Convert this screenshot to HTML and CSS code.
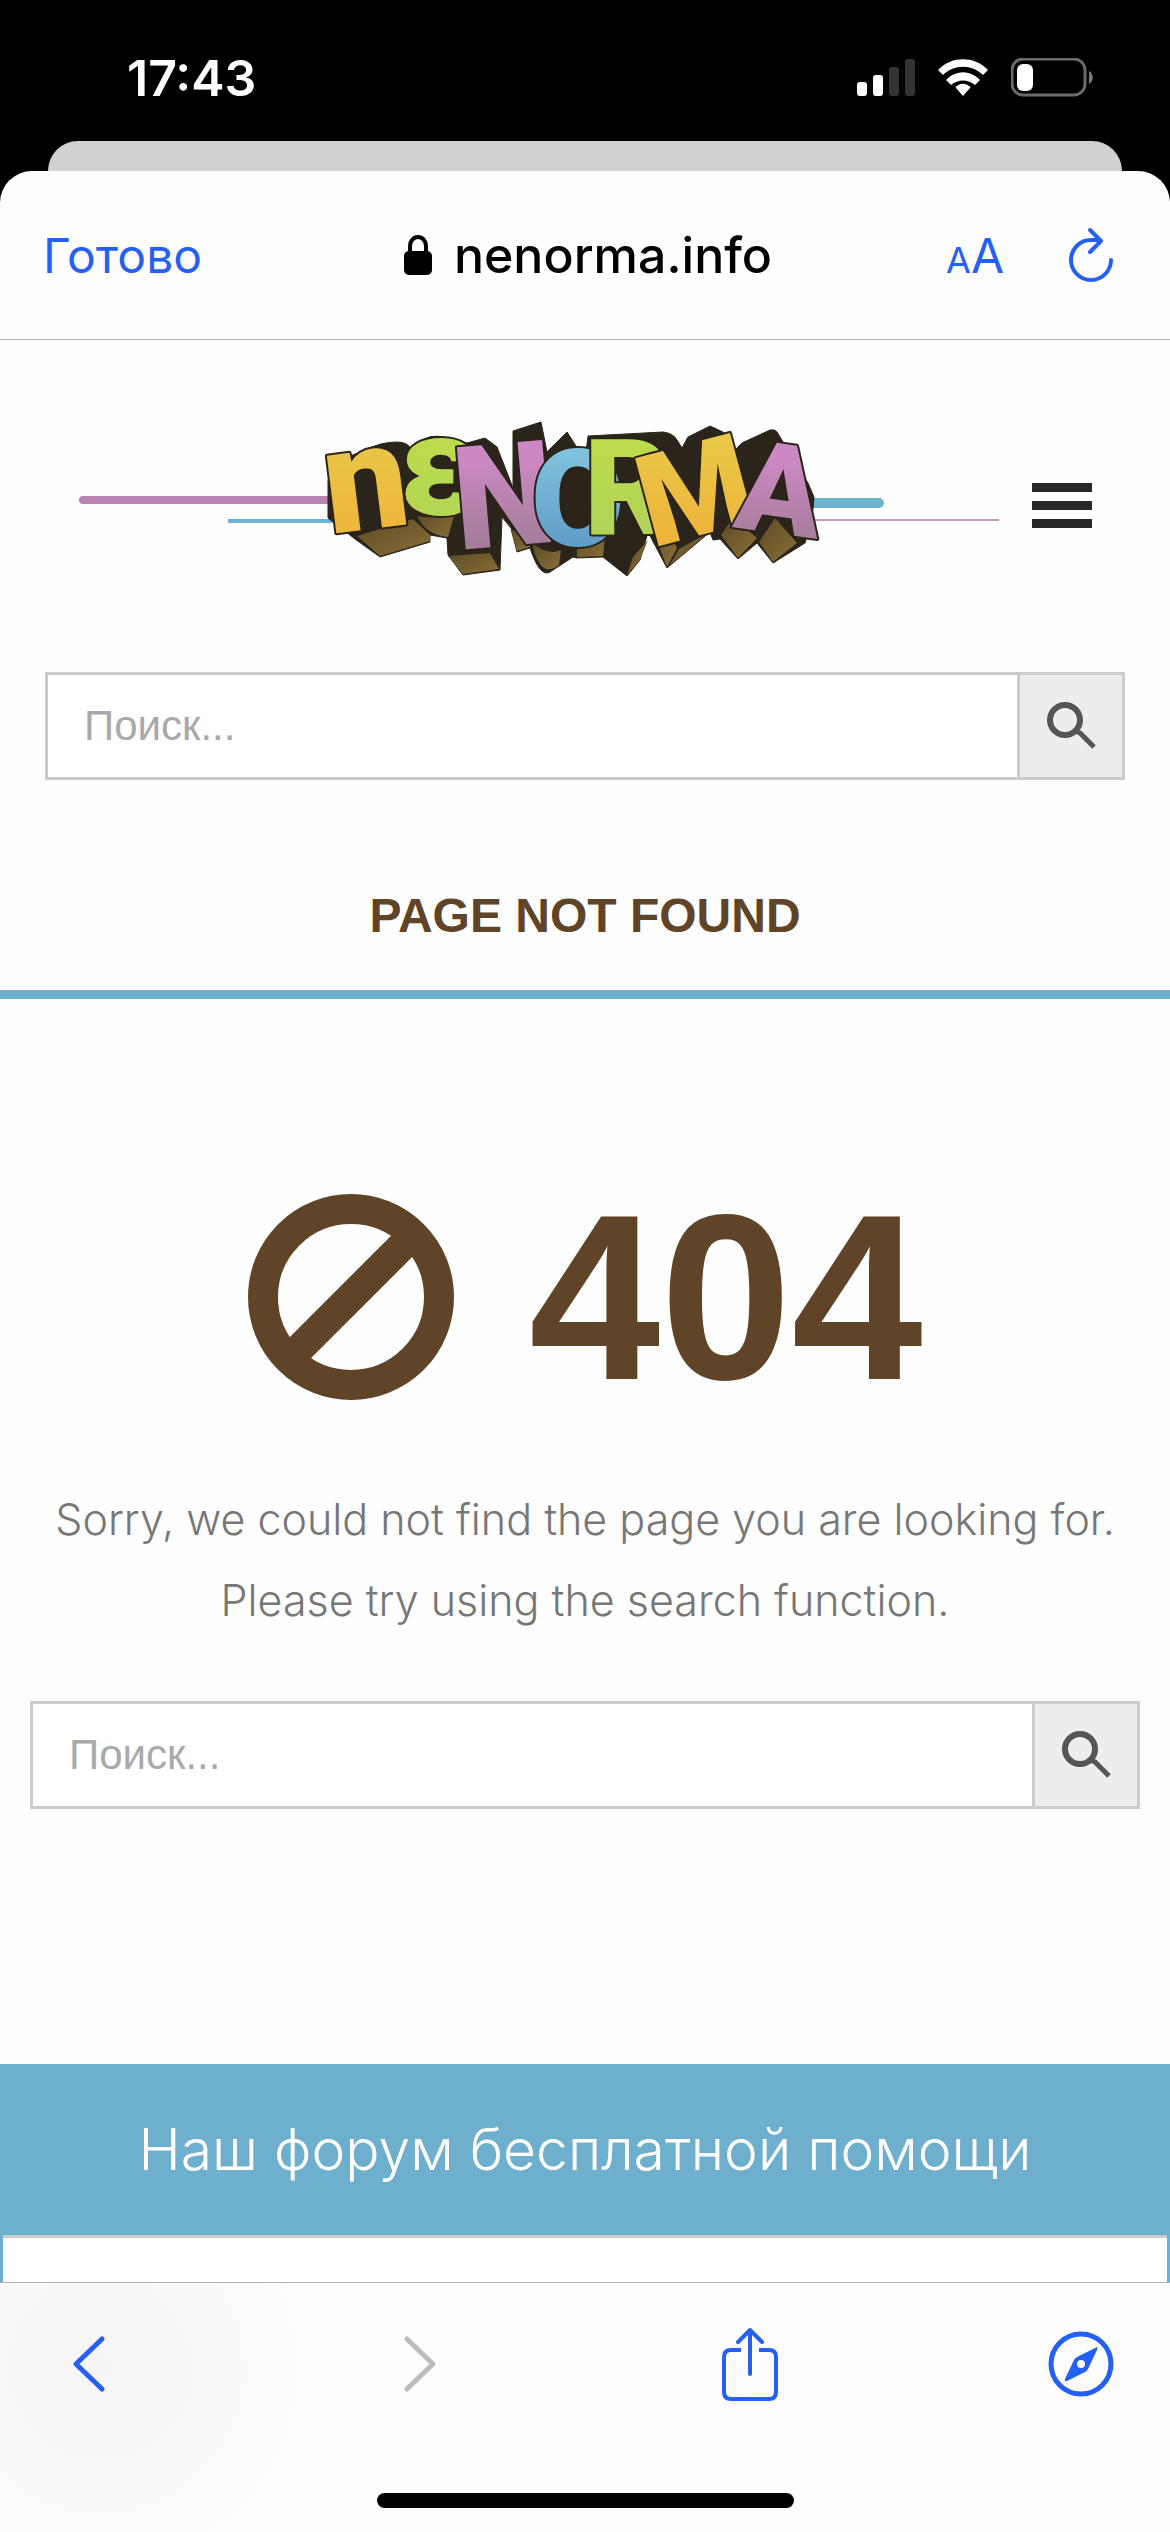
FILE: index.html
```html
<!DOCTYPE html>
<html lang="ru">
<head>
    <meta charset="UTF-8">
    <meta name="viewport" content="width=device-width, initial-scale=1.0">
    <title>Page not found</title>
    <link rel="stylesheet" href="styles.css">
</head>
<body>
    <!-- status bar -->
    <div class="status-bar">
        <span class="time">17:43</span>
        <div class="status-icons">
            <svg width="58" height="37" viewBox="0 0 58 37">
                <rect x="0" y="23" width="10" height="14" rx="3" fill="#fff"/>
                <rect x="16" y="16" width="10" height="21" rx="3" fill="#fff"/>
                <rect x="32" y="8" width="10" height="29" rx="3" fill="#333"/>
                <rect x="48" y="0" width="10" height="37" rx="3" fill="#333"/>
            </svg>
            <svg width="50" height="37" viewBox="0 0 50 37" fill="#fff">
                <path d="M25 37l-7-8c-1-1 0-2 1-2 4-3 8-3 12 0 1 0 2 1 1 2z"/>
                <path d="M9 20c9-9 23-9 32 0 1 1 1 1 0 2l-4 4c-7-6-17-6-24 0l-4-4c-1-1-1-1 0-2z"/>
                <path d="M1 10c13-13 35-13 48 0 1 1 1 1 0 2l-4 4C34 5 16 5 5 16l-4-4c-1-1-1-1 0-2z"/>
            </svg>
            <svg width="82" height="39" viewBox="0 0 82 39">
                <rect x="1" y="1" width="73" height="36" rx="11" fill="none" stroke="#6a6a6a" stroke-width="3"/>
                <rect x="6" y="6" width="16" height="27" rx="6" fill="#fff"/>
                <path d="M78 13c5 3 5 10 0 13z" fill="#7a7a7a"/>
            </svg>
        </div>
    </div>

    <div class="back-card"></div>

    <div class="sheet">
        <!-- browser top bar -->
        <header class="top-bar">
            <button class="link-btn">Готово</button>
            <div class="address">
                <svg width="28" height="40" viewBox="0 0 28 40">
                    <rect x="0" y="16" width="28" height="24" rx="5"/>
                    <path d="M6 19v-8a8 9 0 0 1 16 0v8" fill="none" stroke="#000" stroke-width="4"/>
                </svg>
                <span>nenorma.info</span>
            </div>
            <div class="top-actions">
                <button class="link-btn text-size" aria-label="Размер текста"><small>A</small>A</button>
                <button class="icon-btn" aria-label="Обновить">
                    <svg width="46" height="56" viewBox="0 0 46 56" fill="none" stroke="#2560f4" stroke-width="4" stroke-linecap="round" stroke-linejoin="round">
                        <path d="M43 33a20 20 0 1 1-20-20h9"/>
                        <path d="M22 3l11 11-11 11"/>
                    </svg>
                </button>
            </div>
        </header>

        <main>
            <div class="site-header">
                <svg class="logo" viewBox="0 0 930 190" role="img" aria-label="Nenorma">
                    <defs>
                        <linearGradient id="yellow" gradientUnits="userSpaceOnUse" x1="0" y1="40" x2="0" y2="150"><stop offset="0" stop-color="#e9c748"/><stop offset="1" stop-color="#efb23a"/></linearGradient>
                        <linearGradient id="green" gradientUnits="userSpaceOnUse" x1="0" y1="40" x2="0" y2="150"><stop offset="0" stop-color="#bcdc4b"/><stop offset="1" stop-color="#b0d25c"/></linearGradient>
                        <linearGradient id="pink" gradientUnits="userSpaceOnUse" x1="0" y1="60" x2="0" y2="150"><stop offset="0" stop-color="#cc88c2"/><stop offset="1" stop-color="#a27c98"/></linearGradient>
                        <linearGradient id="blue" gradientUnits="userSpaceOnUse" x1="0" y1="40" x2="0" y2="150"><stop offset="0" stop-color="#84c6e0"/><stop offset="1" stop-color="#609ac8"/></linearGradient>
                        <linearGradient id="side" x1="0" y1="0" x2="1" y2="1"><stop offset="0" stop-color="#5c4a25"/><stop offset="1" stop-color="#8a7038"/></linearGradient>
                    </defs>
                    <!-- lines behind the lettering -->
                    <path d="M5 100h253" stroke="#b983b3" stroke-width="8" stroke-linecap="round"/>
                    <path d="M150 121h119" stroke="#6fb3d0" stroke-width="4"/>
                    <path d="M720 103h81" stroke="#6fb3d0" stroke-width="10" stroke-linecap="round"/>
                    <path d="M720 120h201" stroke="#c795c2" stroke-width="2"/>
                    <!-- dark block -->
                    <path fill="#2b241b" stroke="#2b241b" stroke-width="1" stroke-linejoin="round" d="M250 80V118L277 139 302 157 352 142V135L369 138 370 155 385 175 422 170 424 117 433 128 439 152 452 148Q462 178 472 172L495 157 499 158 525 157 549 176 562 160 570 132 589 168 632 132 635 140 642 139 660 159 679 143 695 163 727 143Q735 120 736 97L730 83 699 32Q697 29 692 30L664 43 657 50 645 32 632 26 610 37 604 48 599 40Q595 33 585 32L510 36 507 60 489 32 469 52 463 22 435 31V88L419 47 407 38 389 43 369 38Q350 32 339 45L334 50Q330 42 319 42 303 42 287 50L260 61 259 77z"/>
                    <!-- block sides -->
                    <g fill="url(#side)">
                        <path d="M279 136L335 119 352 135V141L302 156z"/>
                        <path d="M339 116Q360 120 377 112L370 137Q348 135 339 116z"/>
                        <path d="M370 156L412 153 421 169 385 174z"/>
                        <path d="M433 131L451 128 452 147 439 151z"/>
                        <path d="M454 143Q470 156 483 150L481 165Q462 180 454 143z"/>
                        <path d="M499 138L527 136 525 156 499 157z"/>
                        <path d="M549 175L555 157 570 140 562 160z"/>
                        <path d="M572 123L580 108 599 148 589 167z"/>
                        <path d="M601 149L630 133 591 166z"/>
                        <path d="M655 118L679 138 660 158 643 135z"/>
                        <path d="M697 118L719 143 695 162 681 142z"/>
                    </g>
                    <!-- lettering -->
                    <text class="graffiti" y="134">
                        <tspan x="252" y="134" rotate="-7" font-size="148" fill="url(#yellow)">n</tspan><tspan x="321" y="115" rotate="0" font-size="142" fill="url(#green)">ε</tspan><tspan x="380" y="150" rotate="-5" font-size="144" fill="url(#pink)">N</tspan><tspan x="453" y="146" rotate="0" font-size="136" fill="url(#blue)">O</tspan><tspan x="506" y="135" rotate="0" font-size="134" fill="url(#green)">R</tspan><tspan x="574" y="148" rotate="-15" font-size="128" fill="url(#yellow)">M</tspan><tspan x="654" y="127" rotate="8" font-size="126" fill="url(#pink)">A</tspan>
                    </text>
                </svg>
                <button class="menu-btn" aria-label="Меню"><span></span><span></span><span></span></button>
            </div>

            <form class="search header-search">
                <input type="text" placeholder="Поиск..." aria-label="Поиск">
                <button type="button" aria-label="Найти">
                    <svg width="50" height="50" viewBox="0 0 50 50" fill="none" stroke="#555">
                        <circle cx="19" cy="19" r="15" stroke-width="6"/>
                        <path d="M31 31l3 1 14 14" stroke-width="5"/>
                    </svg>
                </button>
            </form>

            <h1 class="page-title">PAGE NOT FOUND</h1>

            <section class="not-found">
                <div class="code">
                    <svg width="208" height="208" viewBox="0 0 208 208" fill="none" stroke="#5f4427" stroke-width="30">
                        <circle cx="104" cy="104" r="88"/>
                        <path d="M43 165L165 43"/>
                    </svg>
                    <h2>404</h2>
                </div>
                <p>Sorry, we could not find the page you are looking for. Please try using the search function.</p>
                <form class="search">
                    <input type="text" placeholder="Поиск..." aria-label="Поиск">
                    <button type="button" aria-label="Найти">
                        <svg width="50" height="50" viewBox="0 0 50 50" fill="none" stroke="#555">
                            <circle cx="19" cy="19" r="15" stroke-width="6"/>
                            <path d="M31 31l3 1 14 14" stroke-width="5"/>
                        </svg>
                    </button>
                </form>
            </section>

            <section class="forum">
                <h3>Наш форум бесплатной помощи</h3>
                <div class="forum-body"></div>
            </section>
        </main>

        <!-- browser bottom bar -->
        <footer class="bottom-bar">
            <nav>
                <button class="icon-btn" aria-label="Назад">
                    <svg width="34" height="58" viewBox="0 0 34 58" fill="none" stroke="#2560f4" stroke-width="5" stroke-linecap="round" stroke-linejoin="round"><path d="M30 4L4 29l26 25"/></svg>
                </button>
                <button class="icon-btn" aria-label="Вперёд" disabled>
                    <svg width="34" height="58" viewBox="0 0 34 58" fill="none" stroke="#bbb" stroke-width="5" stroke-linecap="round" stroke-linejoin="round"><path d="M4 4l26 25L4 54"/></svg>
                </button>
                <button class="icon-btn" aria-label="Поделиться">
                    <svg width="58" height="74" viewBox="0 0 58 74" fill="none" stroke="#2560f4" stroke-width="4" stroke-linejoin="round">
                        <path d="M20 23H10q-7 0-7 7v35q0 7 7 7h38q7 0 7-7V30q0-7-7-7H38"/>
                        <path d="M29 47V3M17 15L29 3l12 12" stroke-linecap="round"/>
                    </svg>
                </button>
                <button class="icon-btn" aria-label="Открыть в Safari">
                    <svg width="66" height="66" viewBox="0 0 66 66">
                        <circle cx="33" cy="33" r="30" fill="none" stroke="#2560f4" stroke-width="5"/>
                        <path d="M49 16q1 1 0 3l-9 19q-1 2-3 3L19 50q-3 1-2-2l9-19q1-2 3-3l18-9q2-1 2-1z" fill="#2560f4"/>
                        <circle cx="33" cy="33" r="4" fill="#fdfdfd"/>
                    </svg>
                </button>
            </nav>
            <div class="home-indicator"></div>
        </footer>
    </div>
</body>
</html>
```
FILE: styles.css
```css
* {
    box-sizing: border-box;
}

body {
    margin: 0;
    min-height: 100vh;
    display: flex;
    flex-direction: column;
    background-color: #000;
    font-family: "Liberation Sans", Arial, sans-serif;
}

button {
    padding: 0;
    border: none;
    background: none;
    cursor: pointer;
}

svg {
    display: block;
}

h1, h2, h3, p {
    margin: 0;
}

.status-bar {
    display: flex;
    justify-content: space-between;
    align-items: center;
    height: 141px;
    padding: 14px 77px 0 127px;
    color: white;
}

.time {
    font-family: Inter, sans-serif;
    font-size: 50px;
    font-weight: 600;
}

.status-icons {
    display: flex;
    align-items: center;
    gap: 23px;
}

.back-card {
    height: 30px;
    margin: 0 48px;
    background-color: #d1d1cf;
    border-radius: 30px 30px 0 0;
}

.sheet {
    flex: 1;
    display: flex;
    flex-direction: column;
    background-color: #fefefe;
    border-radius: 32px 32px 0 0;
}

.top-bar {
    display: grid;
    grid-template-columns: 1fr auto 1fr;
    align-items: center;
    height: 169px;
    padding: 0 43px;
    border-bottom: 1px solid #b2b2b2;
    font-family: Inter, sans-serif;
}

.link-btn {
    justify-self: start;
    color: #2560f4;
    font-family: Inter, sans-serif;
    font-size: 48px;
}

.address {
    display: flex;
    align-items: center;
    gap: 22px;
    padding-left: 6px;
    font-size: 50px;
    font-weight: 500;
}

.top-actions {
    display: flex;
    justify-content: flex-end;
    align-items: center;
    gap: 64px;
    padding-right: 13px;
}

.text-size small {
    font-size: 36px;
}

main {
    flex: 1;
}

.site-header {
    display: flex;
    justify-content: space-between;
    padding: 60px 78px 82px;
}

.logo {
    flex: 1;
    max-width: 930px;
}

.graffiti {
    font-family: Roboto, sans-serif;
    font-weight: 900;
    stroke: #2b241b;
    stroke-width: 4px;
    stroke-linejoin: round;
    paint-order: stroke;
}

.menu-btn {
    display: flex;
    flex-direction: column;
    gap: 9px;
    padding-top: 83px;
}

.menu-btn span {
    width: 60px;
    height: 9px;
    background-color: #292929;
}

.search {
    display: flex;
    height: 108px;
    border: 3px solid #ccc;
}

.search input {
    flex: 1;
    min-width: 0;
    padding: 0 36px;
    border: none;
    background-color: white;
    font-family: "Liberation Sans", Arial, sans-serif;
    font-size: 42px;
}

.search input::placeholder {
    color: #a9a9a9;
}

.search button {
    display: flex;
    justify-content: center;
    align-items: center;
    width: 105px;
    border-left: 3px solid #ccc;
    background-color: #ededed;
}

.header-search {
    margin: 0 45px;
}

.page-title {
    padding: 108px 0 46px;
    border-bottom: 9px solid #6dafcc;
    color: #5f4427;
    font-size: 48px;
    line-height: 56px;
    text-align: center;
}

.not-found {
    padding: 178px 30px 255px;
}

.code {
    display: flex;
    justify-content: center;
    align-items: center;
    gap: 74px;
    color: #5f4427;
}

.code h2 {
    font-size: 236px;
    line-height: 240px;
}

.not-found p {
    margin: 62px 0 60px;
    color: #777;
    font-family: Inter, sans-serif;
    font-size: 43px;
    font-weight: 300;
    line-height: 81px;
    text-align: center;
}

.forum {
    background-color: #6dafcc;
}

.forum h3 {
    color: white;
    font-family: Inter, sans-serif;
    font-size: 57px;
    font-weight: 300;
    line-height: 171px;
    text-align: center;
}

.forum-body {
    height: 47px;
    margin: 0 3px;
    border-top: 3px solid #ccc;
    background-color: white;
}

.bottom-bar {
    display: flex;
    flex-direction: column;
    justify-content: space-between;
    align-items: center;
    height: 250px;
    padding-bottom: 24px;
    border-top: 1px solid #b2b2b2;
    background: radial-gradient(circle at 100px 85px, #f5f5f5, #fdfdfd 210px);
}

.bottom-bar nav {
    display: flex;
    justify-content: space-between;
    align-items: center;
    width: 100%;
    padding: 44px 56px 0;
}

.bottom-bar .icon-btn {
    display: flex;
    justify-content: center;
    width: 66px;
}

.home-indicator {
    width: 417px;
    height: 15px;
    border-radius: 8px;
    background-color: black;
}
```
